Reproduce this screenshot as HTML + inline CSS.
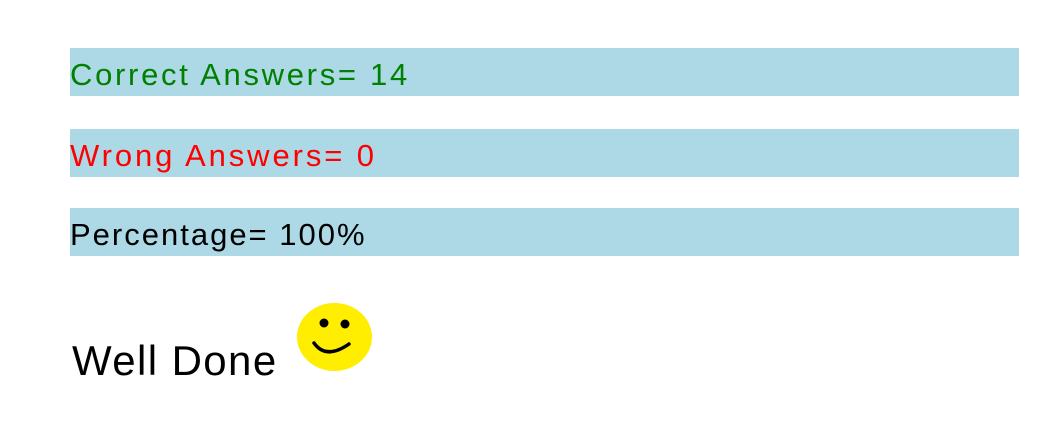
<!DOCTYPE html>
<html><head><style>
body{margin:0;width:1037px;height:447px;background:#fff;font-family:"Comic Sans MS","Liberation Sans",sans-serif;position:relative;overflow:hidden}
.bar{position:absolute;left:70px;width:949px;height:48px;background:#add8e6;font-size:31px;line-height:54px;white-space:nowrap}
</style></head><body>
<div class="bar" style="top:48px;color:#008000;letter-spacing:2.7px">Correct Answers= 14</div>
<div class="bar" style="top:129px;color:#ff0000;letter-spacing:2.9px">Wrong Answers= 0</div>
<div class="bar" style="top:208px;color:#000;letter-spacing:2px">Percentage= 100%</div>
<div style="position:absolute;left:72px;top:334px;font-size:42px;line-height:54px;letter-spacing:1.4px">Well Done</div>
<svg style="position:absolute;left:0;top:0" width="1037" height="447">
<ellipse cx="334.5" cy="337" rx="37.5" ry="34" fill="#ffee00"/>
<circle cx="324" cy="323" r="4.5" fill="#000"/>
<circle cx="345" cy="324" r="4.5" fill="#000"/>
<path d="M314 343 Q326 360 349 344" stroke="#000" stroke-width="3.5" fill="none" stroke-linecap="round"/>
</svg>
</body></html>
